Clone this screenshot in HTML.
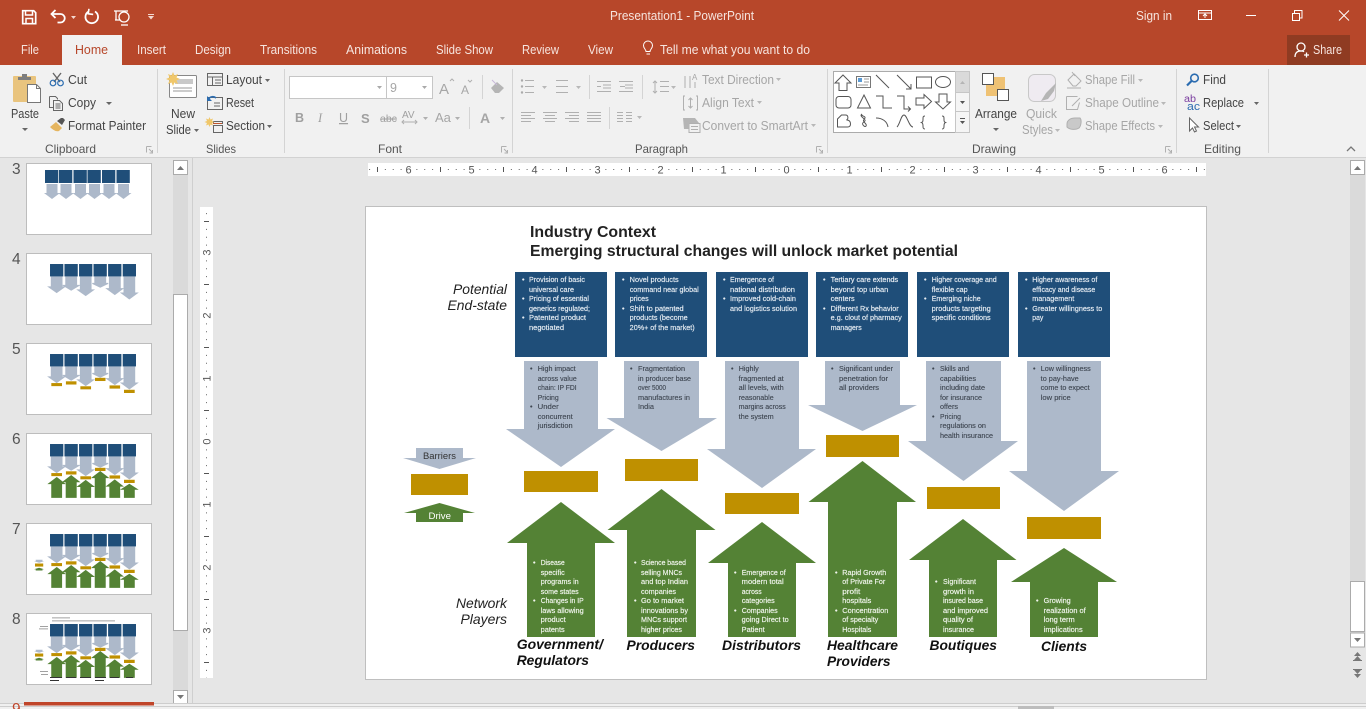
<!DOCTYPE html>
<html lang="en"><head><meta charset="utf-8"><title>Presentation1 - PowerPoint</title>
<style>
html,body{margin:0;padding:0;background:#E6E6E6;width:1366px;height:709px;overflow:hidden}
svg{display:block;position:absolute;left:0;top:0}
text{font-family:"Liberation Sans",sans-serif;white-space:pre}
.r{font-size:12.5px;fill:#444}
.g{font-size:12.5px;fill:#A6A6A6}
.gl{font-size:12px;fill:#555}
.w{font-size:12.5px;fill:#fff}
.tb{font-size:12.5px;fill:#F6E4DE}
.b{font-size:7.2px;fill:#E8EEF4;stroke:#E8EEF4;stroke-width:.15px}
.k{font-size:7.2px;fill:#3D4550;stroke:#3D4550;stroke-width:.12px}
.n{font-size:7.2px;fill:#F2F6EE;stroke:#F2F6EE;stroke-width:.15px}
.ru{font-size:11px;fill:#555;paint-order:stroke;stroke:#fff;stroke-width:3px}
.th{font-size:15.5px;fill:#555}
.i{font-size:14px;font-style:italic;fill:#222}
.bi{font-size:14px;font-style:italic;font-weight:bold;fill:#111}
.t{font-size:16px;font-weight:bold;fill:#222}
.ic{fill:none;stroke:#666;stroke-width:1}
.icg{fill:none;stroke:#B0B0B0;stroke-width:1}
.sh{fill:none;stroke:#555;stroke-width:1}
.wi{fill:none;stroke:#fff;stroke-width:1.3}
</style></head><body>
<svg width="1366" height="709" viewBox="0 0 1366 709" xmlns="http://www.w3.org/2000/svg">
<defs>
<g id="boxes" fill="#1F4E79"><rect x="515" y="272" width="92" height="85"/><rect x="615" y="272" width="92" height="85"/><rect x="716" y="272" width="92" height="85"/><rect x="816" y="272" width="92" height="85"/><rect x="917" y="272" width="92" height="85"/><rect x="1018" y="272" width="92" height="85"/></g>
<g id="grays" fill="#ADB9CA" stroke="#ADB9CA">
<polygon points="524,361 598,361 598,429 615,429 561,467 506,429 524,429"/>
<polygon points="624,361 699,361 699,418 717,418 661.5,451 606.5,418 624,418"/>
<polygon points="725,361 799,361 799,449 816,449 762,488 707,449 725,449"/>
<polygon points="825,361 900,361 900,405 917,405 862.5,431 808,405 825,405"/>
<polygon points="926,361 1001,361 1001,441 1018,441 963.5,481 908,441 926,441"/>
<polygon points="1027,361 1101,361 1101,471 1119,471 1064,511 1009,471 1027,471"/>
</g>
<g id="golds" fill="#BF9000"><rect x="524" y="471" width="74" height="21"/><rect x="625" y="459" width="73" height="22"/><rect x="725" y="493" width="74" height="21"/><rect x="826" y="435" width="73" height="22"/><rect x="927" y="487" width="73" height="22"/><rect x="1027" y="517" width="74" height="22"/></g>
<g id="greens" fill="#548235" stroke="#548235">
<polygon points="561,502 615,543 595,543 595,637 527,637 527,543 507,543"/>
<polygon points="661.5,489 715.5,530 696,530 696,637 627,637 627,530 607.5,530"/>
<polygon points="762,522 816,563 796,563 796,637 728,637 728,563 708,563"/>
<polygon points="862.5,461 916,502 897,502 897,637 828,637 828,502 808.5,502"/>
<polygon points="963,519 1016.5,560 997,560 997,637 929,637 929,560 909,560"/>
<polygon points="1064,548 1117,582 1098,582 1098,637 1030,637 1030,582 1011,582"/>
</g>
<g id="legend">
<polygon fill="#ADB9CA" points="416,448 463,448 463,458 476,458 439.5,469 403,458 416,458"/>
<rect fill="#BF9000" x="411" y="474" width="57" height="21"/>
<polygon fill="#548235" points="439.5,503 475,513 463,513 463,522 416,522 416,513 404,513"/>
</g>
</defs>

<!-- backgrounds -->
<rect width="1366" height="709" fill="#E6E6E6"/>
<rect width="1366" height="65" fill="#B7472A"/>
<rect y="65" width="1366" height="92" fill="#F1F1F1"/>
<rect y="157" width="1366" height="1" fill="#D2D2D2"/>
<rect x="62" y="35" width="60" height="30" fill="#F1F1F1"/>
<rect x="1287" y="35" width="63" height="30" fill="#8F3B22"/>

<!-- title bar icons -->
<g class="wi">
<path d="M22.700 10.700h11l2 2v11h-13z" stroke-width="1.700"/><path d="M25.500 10.700v4.300h7v-4.300" stroke-width="1.500"/><path d="M26 23.500v-5h6.500v5" stroke-width="1.500"/>
<path d="M52 14h8.500a4 4 0 0 1 0 8.500h-3" stroke-width="1.800"/><path d="M55.500 10l-4 4 4 4" stroke-width="1.800"/>
<path d="M88.500 11.500a6.300 6.300 0 1 0 6.500 0" stroke-width="1.800"/><path d="M88.500 9v5h5" stroke-width="1.600" transform="rotate(8 90 12)"/>
<path d="M114 11h14M116 11v9M120 20h-5M124 11v1"/><circle cx="124" cy="17" r="5"/><path d="M121 25h7"/>
<path d="M1198.500 10.500h13v9h-13zM1198.500 13h13M1205 18v-4M1203 16l2-2 2 2" stroke-width="1"/>
<path d="M1246 15.500h10" stroke-width="1"/>
<path d="M1292.500 13.500h7v7h-7zM1294.500 13v-2.500h7.500v7.500h-2.500" stroke-width="1"/>
<path d="M1339 10.500l10 10M1349 10.500l-10 10" stroke-width="1"/>
</g>
<path d="M71 16h5l-2.500 3z" fill="#F4D9D0"/>
<path d="M148 14h6v1h-6zM148 16h6l-3 3.500z" fill="#F4D9D0"/>

<!-- title bar text -->
<text x="610" y="20" class="tb" textLength="144" lengthAdjust="spacingAndGlyphs">Presentation1 - PowerPoint</text>
<text x="1136" y="20" class="tb" textLength="36" lengthAdjust="spacingAndGlyphs">Sign in</text>
<text x="21" y="54" class="tb" textLength="18" lengthAdjust="spacingAndGlyphs">File</text>
<text x="75" y="54" style="font-size:12.5px;fill:#B7472A" textLength="33" lengthAdjust="spacingAndGlyphs">Home</text>
<text x="137" y="54" class="tb" textLength="29" lengthAdjust="spacingAndGlyphs">Insert</text>
<text x="195" y="54" class="tb" textLength="36" lengthAdjust="spacingAndGlyphs">Design</text>
<text x="260" y="54" class="tb" textLength="57" lengthAdjust="spacingAndGlyphs">Transitions</text>
<text x="346" y="54" class="tb" textLength="61" lengthAdjust="spacingAndGlyphs">Animations</text>
<text x="436" y="54" class="tb" textLength="57" lengthAdjust="spacingAndGlyphs">Slide Show</text>
<text x="522" y="54" class="tb" textLength="37" lengthAdjust="spacingAndGlyphs">Review</text>
<text x="588" y="54" class="tb" textLength="25" lengthAdjust="spacingAndGlyphs">View</text>
<text x="660" y="54" class="tb" textLength="150" lengthAdjust="spacingAndGlyphs">Tell me what you want to do</text>
<text x="1313" y="54" class="tb" textLength="29" lengthAdjust="spacingAndGlyphs">Share</text>
<g class="wi" stroke-width="1">
<path d="M646 51.500c0-2-2.500-3-2.500-6a4.500 4.500 0 0 1 9 0c0 3-2.500 4-2.500 6zM646.500 54h3.500" stroke-width="1"/>
<circle cx="1301" cy="47" r="4"/><path d="M1295 57c0-4 2-6 6-6 1.500 0 2.500.3 3 .8M1304 55h5M1306.500 52.500v5"/>
</g>

<!-- ribbon separators -->
<g fill="#D4D4D4"><rect x="157" y="69" width="1" height="84"/><rect x="284" y="69" width="1" height="84"/><rect x="512" y="69" width="1" height="84"/><rect x="827" y="69" width="1" height="84"/><rect x="1176" y="69" width="1" height="84"/><rect x="1268" y="69" width="1" height="84"/>
<rect x="482" y="75" width="1" height="24"/><rect x="469" y="107" width="1" height="22"/><rect x="589" y="75" width="1" height="24"/><rect x="642" y="75" width="1" height="24"/><rect x="609" y="107" width="1" height="22"/></g>

<!-- clipboard -->
<rect x="13" y="76" width="23" height="26" rx="1" fill="#E9C47E"/>
<path d="M18 80v-3h4v-3h5v3h4v3z" fill="#7D7D7D"/>
<path d="M27.500 84.500h9l4 4v14h-13z" fill="#fff" stroke="#777"/>
<path d="M36.500 84.500v4h4" fill="none" stroke="#777"/>
<text x="11" y="118" class="r" textLength="28" lengthAdjust="spacingAndGlyphs">Paste</text>
<path d="M22 128h6l-3 3z" fill="#666"/>
<path d="M53 73l7 9M61 73l-7 9" stroke="#666" stroke-width="1.400" fill="none"/>
<circle cx="53" cy="83" r="2.800" fill="none" stroke="#2B6CB0" stroke-width="1.200"/><circle cx="60.500" cy="83" r="2.800" fill="none" stroke="#2B6CB0" stroke-width="1.200"/>
<text x="68" y="84" class="r" textLength="19" lengthAdjust="spacingAndGlyphs">Cut</text>
<path class="ic" d="M49.500 96.500h6l2 2v1M49.500 96.500v11h4M53.500 100.500h6l3 3v7h-9zM55.500 104h5M55.500 106h5M55.500 108h5"/>
<text x="68" y="107" class="r" textLength="28" lengthAdjust="spacingAndGlyphs">Copy</text>
<path d="M106 102h6l-3 3z" fill="#666"/>
<path d="M50 127l6-5 6 6-3 3c-3 1-6-1-9-4z" fill="#E5B55F"/><path d="M57 121l4-3 2 0 2 2-3 5z" fill="#555"/>
<text x="68" y="130" class="r" textLength="78" lengthAdjust="spacingAndGlyphs">Format Painter</text>
<text x="45" y="153" class="gl" textLength="51" lengthAdjust="spacingAndGlyphs">Clipboard</text>
<path class="icg" d="M146.500 146.500h5M146.500 146.500v6M149 149l3.500 3.500M152.500 150v3h-3" stroke="#888"/>

<!-- slides -->
<rect x="169.500" y="75.500" width="27" height="22" rx="1" fill="#fff" stroke="#888"/>
<rect x="175" y="79" width="18" height="5" fill="#C9C9C9"/>
<path d="M173 88h19M173 91h19" stroke="#999" fill="none"/>
<path d="M173 72l1.500 3.500 3.500-1.500-1.500 3.500 3.500 1.500-3.500 1.500 1.500 3.500-3.500-1.500-1.500 3.500-1.500-3.500-3.500 1.500 1.500-3.500-3.500-1.500 3.500-1.500-1.500-3.500 3.500 1.500z" fill="#F0C76A"/>
<text x="171" y="118" class="r" textLength="24" lengthAdjust="spacingAndGlyphs">New</text>
<text x="166" y="134" class="r" textLength="25" lengthAdjust="spacingAndGlyphs">Slide</text>
<path d="M194 129h5l-2.500 3z" fill="#666"/>
<path class="ic" d="M207.500 73.500h15v12h-15zM207.500 77h15M212.500 77v8.500M215 80h6M215 83h6"/>
<text x="226" y="84" class="r" textLength="36" lengthAdjust="spacingAndGlyphs">Layout</text>
<path d="M265 79h5l-2.500 3z" fill="#666"/>
<path class="ic" d="M207.500 97.500h15v12h-15zM214 103h6M214 106h6"/>
<path d="M208 100c2-4 6-4 8-2" stroke="#2B6CB0" stroke-width="1.600" fill="none"/><path d="M207 96v5h5z" fill="#2B6CB0"/>
<text x="226" y="107" class="r" textLength="28" lengthAdjust="spacingAndGlyphs">Reset</text>
<path class="ic" d="M213.500 121.500h9v2h-9zM213.500 125.500h9v7h-9z"/><path d="M213 123.500h9" stroke="#C0562F" fill="none"/>
<path d="M209.500 117l1 2.500 2.500-1-1 2.500 2.500 1-2.500 1 1 2.500-2.500-1-1 2.500-1-2.500-2.500 1 1-2.500-2.500-1 2.500-1-1-2.500 2.500 1z" fill="#F0C76A"/>
<text x="226" y="130" class="r" textLength="39" lengthAdjust="spacingAndGlyphs">Section</text>
<path d="M267 125h5l-2.500 3z" fill="#666"/>
<text x="206" y="153" class="gl" textLength="30" lengthAdjust="spacingAndGlyphs">Slides</text>

<!-- font -->
<rect x="289.500" y="76.500" width="97" height="22" fill="#fff" stroke="#C6C6C6"/>
<rect x="386.500" y="76.500" width="46" height="22" fill="#fff" stroke="#C6C6C6"/>
<text x="390" y="92" class="g">9</text>
<path d="M377 86h5l-2.500 3zM422 86h5l-2.500 3z" fill="#AAA"/>
<text x="439" y="94" style="font-size:15px;fill:#A6A6A6">A</text><text x="461" y="94" style="font-size:12px;fill:#A6A6A6">A</text>
<path d="M450 81l2-2 2 2M468 80l2 2 2-2" class="icg"/>
<path d="M491 88l6-6 7 6-5 5-4 0z" fill="#B5B5B5"/><path d="M492 80l5 5" stroke="#C8B8D8" fill="none"/>
<text x="295" y="122" style="font-size:12.500px;font-weight:bold;fill:#A0A0A0">B</text>
<text x="318" y="122" style="font-size:12.500px;font-style:italic;fill:#A0A0A0;font-family:'Liberation Serif',serif">I</text>
<text x="339" y="122" style="font-size:12.500px;fill:#A0A0A0;text-decoration:underline">U</text>
<text x="361" y="123" style="font-size:13px;font-weight:bold;fill:#A0A0A0">S</text>
<text x="380" y="122" style="font-size:10.500px;fill:#A0A0A0;text-decoration:line-through">abc</text>
<text x="402" y="118" style="font-size:10px;fill:#A0A0A0">AV</text>
<path d="M402 122h15M404 120l-2 2 2 2M415 120l2 2-2 2" class="icg"/>
<path d="M423 117h5l-2.500 3zM455 117h5l-2.500 3zM500 117h5l-2.500 3z" fill="#B0B0B0"/>
<text x="435" y="122" style="font-size:13px;fill:#A6A6A6">Aa</text>
<text x="480" y="123" style="font-size:14px;font-weight:bold;fill:#A6A6A6">A</text>
<text x="378" y="153" class="gl" textLength="24" lengthAdjust="spacingAndGlyphs">Font</text>
<path class="icg" d="M501.500 146.500h5M501.500 146.500v6M504 149l3.500 3.500M507.500 150v3h-3"/>

<!-- paragraph -->
<g class="icg">
<path d="M525 80.500h9M525 86.500h9M525 92.500h9M556 80.500h12M556 86.500h12M556 92.500h12"/>
<path d="M597 81.500h14M603 85h8M603 88h8M597 91.500h14M597 86.500h4M619 81.500h14M625 85h8M625 88h8M619 91.500h14M625 86.500h-5"/>
<path d="M655 81v12M653 83l2-2 2 2M653 91l2 2 2-2M660 81.500h9M660 86.500h9M660 91.500h9"/>
<path d="M521 112.500h14M521 115.500h10M521 118.500h14M521 121.500h10M543 112.500h14M545 115.500h10M543 118.500h14M545 121.500h10M565 112.500h14M569 115.500h10M565 118.500h14M569 121.500h10M587 112.500h14M587 115.500h14M587 118.500h14M587 121.500h14M617 112.500h6M617 115.500h6M617 118.500h6M617 121.500h6M626 112.500h6M626 115.500h6M626 118.500h6M626 121.500h6"/>
<path d="M685 76v12M690 76v12M695 82v6"/>
<path d="M685 96h-1.500v14h1.500M696 96h1.500v14H696M690.500 98v10M688.500 100l2-2 2 2M688.500 106l2 2 2-2"/>
<path d="M689 123.500h11v9h-11zM691 126.500h7M691 129.500h7"/>
</g>
<circle cx="522" cy="80.500" r="1.200" fill="#AAA"/><circle cx="522" cy="86.500" r="1.200" fill="#AAA"/><circle cx="522" cy="92.500" r="1.200" fill="#AAA"/>
<path d="M542 86h5l-2.500 3zM576 86h5l-2.500 3zM671 86h5l-2.500 3zM637 116h5l-2.500 3zM776 78h5l-2.500 3zM757 101h5l-2.500 3zM811 124h5l-2.500 3z" fill="#B8B8B8"/>
<text x="692" y="80" style="font-size:8px;fill:#A6A6A6">A</text>
<path d="M683 118h12l4 5h-10v6h-5z" fill="#B5B5B5"/>
<text x="702" y="84" class="g" textLength="72" lengthAdjust="spacingAndGlyphs">Text Direction</text>
<text x="702" y="107" class="g" textLength="52" lengthAdjust="spacingAndGlyphs">Align Text</text>
<text x="702" y="130" class="g" textLength="106" lengthAdjust="spacingAndGlyphs">Convert to SmartArt</text>
<text x="635" y="153" class="gl" textLength="53" lengthAdjust="spacingAndGlyphs">Paragraph</text>
<path class="icg" d="M816.500 146.500h5M816.500 146.500v6M819 149l3.500 3.500M822.500 150v3h-3"/>

<!-- shape gallery -->
<rect x="833.500" y="71.500" width="122" height="61" fill="#fff" stroke="#ABABAB"/>
<rect x="955.500" y="71.500" width="14" height="21" fill="#DADADA" stroke="#C6C6C6"/>
<rect x="955.500" y="92.500" width="14" height="19" fill="#F5F5F5" stroke="#C6C6C6"/>
<rect x="955.500" y="111.500" width="14" height="21" fill="#F5F5F5" stroke="#C6C6C6"/>
<path d="M960 84h5l-2.500-3z" fill="#B5B5B5"/><path d="M960 101h5l-2.500 3z" fill="#555"/><path d="M960 118h5v1h-5zM960 121h5l-2.500 3z" fill="#555"/>
<g class="sh">
<path d="M843 75l8 8h-4v7.500h-8V83h-4z"/>
<rect x="856.500" y="76.500" width="14" height="11" fill="#fff" stroke="#777"/>
<path d="M876 75l13 13M897 75l14 14M911 84v5h-5"/>
<rect x="916.500" y="77" width="15" height="11"/><ellipse cx="943" cy="82" rx="7.500" ry="5.500"/>
<rect x="836" y="96.500" width="15" height="11.500" rx="3"/><path d="M864 95l6.500 13h-13zM876 96h7v12h9M897 96h7v13h6M908 106.500l2.500 2.500-2.500 2.500"/>
<path d="M916 98h8v-3.500l7.500 7-7.500 7V105h-8zM939 94h8v8h3.500l-7.500 7-7.500-7h3.500z"/>
<path d="M837.500 127v-8l4-4h4c3 0 3 4 1 5 3 0 4 2 4 4 0 2-1 3-3 3z"/><path d="M862 114c-3 2 2 4 3 6s-4 2-2 5 5 1 2-2-1-3 0-5-5-2-3-4z"/>
<path d="M876 118c6 0 11 3 12 9M897 127c3-3 4-12 7-12s5 12 9 12"/>
<path d="M925 116c-2 0-2 1-2 3s0 3-1.500 3.500c1.500.5 1.500 2 1.500 3.500s0 3 2 3M942 116c2 0 2 1 2 3s0 3 1.500 3.500c-1.500.5-1.500 2-1.500 3.500s0 3-2 3"/>
</g>
<path d="M858 78h4v4h-4z" fill="#5B9BD5"/><path d="M864 79h5M864 82h5M858 85h10" stroke="#999" fill="none"/>

<!-- drawing -->
<rect x="986" y="77" width="19" height="19" fill="#EFC274"/>
<rect x="982.500" y="73.500" width="11" height="11" fill="#fff" stroke="#555"/>
<rect x="997.500" y="89.500" width="11" height="11" fill="#fff" stroke="#555"/>
<text x="975" y="118" class="r" textLength="42" lengthAdjust="spacingAndGlyphs">Arrange</text>
<path d="M993 128h6l-3 3z" fill="#666"/>
<rect x="1028.500" y="74.500" width="27" height="27" rx="6" fill="#EFEBF1" stroke="#C8C8C8"/>
<path d="M1041 101l5-8 6-6 4-4-2 8-6 8z" fill="#B5B5B5"/>
<text x="1026" y="118" class="g" textLength="31" lengthAdjust="spacingAndGlyphs">Quick</text>
<text x="1022" y="134" class="g" textLength="31" lengthAdjust="spacingAndGlyphs">Styles</text>
<path d="M1055 129h5l-2.500 3z" fill="#B8B8B8"/>
<path class="icg" d="M1068 80l6-6 7 7-5 5h-3zM1072 72l3 4M1067 88h14"/>
<path class="icg" d="M1066.500 96.500h11M1066.500 96.500v13h11l2-7M1072 106l8-8"/>
<path d="M1067 124c0-4 4-6 8-6h5c2 2 1 8-1 10-3 2-9 2-12-1z" fill="#C9C9C9" stroke="#AFAFAF"/>
<text x="1085" y="84" class="g" textLength="50" lengthAdjust="spacingAndGlyphs">Shape Fill</text>
<text x="1085" y="107" class="g" textLength="74" lengthAdjust="spacingAndGlyphs">Shape Outline</text>
<text x="1085" y="130" class="g" textLength="70" lengthAdjust="spacingAndGlyphs">Shape Effects</text>
<path d="M1138 79h5l-2.500 3zM1161 102h5l-2.500 3zM1158 125h5l-2.500 3z" fill="#B8B8B8"/>
<text x="972" y="153" class="gl" textLength="44" lengthAdjust="spacingAndGlyphs">Drawing</text>
<path class="icg" d="M1165.500 146.500h5M1165.500 146.500v6M1168 149l3.500 3.500M1171.500 150v3h-3"/>

<!-- editing -->
<circle cx="1194.500" cy="78" r="3.800" fill="none" stroke="#2B6CB0" stroke-width="1.600"/><path d="M1191.500 81l-4.500 4.500" stroke="#2B6CB0" stroke-width="2.200" fill="none"/>
<text x="1203" y="84" class="r" textLength="23" lengthAdjust="spacingAndGlyphs">Find</text>
<text x="1184" y="102" style="font-size:10px;fill:#7B3FA0" textLength="12" lengthAdjust="spacingAndGlyphs">ab</text>
<text x="1187" y="110" style="font-size:11px;fill:#2B6CB0" textLength="13" lengthAdjust="spacingAndGlyphs">ac</text>
<text x="1203" y="107" class="r" textLength="41" lengthAdjust="spacingAndGlyphs">Replace</text>
<path d="M1254 102h5l-2.500 3z" fill="#666"/>
<path d="M1189.500 118v13l3-3 2 4 2-1-2-4h4z" fill="#fff" stroke="#666"/>
<text x="1203" y="130" class="r" textLength="31" lengthAdjust="spacingAndGlyphs">Select</text>
<path d="M1236 125h5l-2.500 3z" fill="#666"/>
<text x="1204" y="153" class="gl" textLength="37" lengthAdjust="spacingAndGlyphs">Editing</text>
<path d="M1347 151l4-4 4 4" fill="none" stroke="#777" stroke-width="1.300"/>

<!-- left pane -->
<rect x="192" y="158" width="1" height="545" fill="#CFCFCF"/>
<rect x="173" y="160" width="15" height="543" fill="#DADADA"/>
<rect x="173.500" y="160.500" width="14" height="14" fill="#fff" stroke="#ABABAB"/>
<path d="M177 170h7l-3.500-4z" fill="#777"/>
<rect x="173.500" y="294.500" width="14" height="336" fill="#fff" stroke="#ABABAB"/>
<rect x="173.500" y="690.500" width="14" height="14" fill="#fff" stroke="#ABABAB"/>
<path d="M177 695h7l-3.500 4z" fill="#777"/>

<!-- thumbnails -->
<g fill="#fff" stroke="#BDBDBD">
<rect x="26.500" y="163.500" width="125" height="71"/><rect x="26.500" y="253.500" width="125" height="71"/><rect x="26.500" y="343.500" width="125" height="71"/><rect x="26.500" y="433.500" width="125" height="71"/><rect x="26.500" y="523.500" width="125" height="71"/><rect x="26.500" y="613.500" width="125" height="71"/>
</g>
<text x="12" y="174" class="th">3</text><text x="12" y="264" class="th">4</text><text x="12" y="354" class="th">5</text><text x="12" y="444" class="th">6</text><text x="12" y="534" class="th">7</text><text x="12" y="624" class="th">8</text>
<g fill="#1F4E79"><rect x="45" y="170" width="13.300" height="13"/><rect x="59" y="170" width="13.300" height="13"/><rect x="73.500" y="170" width="13.300" height="13"/><rect x="87.500" y="170" width="13.300" height="13"/><rect x="102" y="170" width="13.300" height="13"/><rect x="116.500" y="170" width="13.300" height="13"/></g>
<g fill="#ADB9CA">
<polygon points="46.500,184 57.500,184 57.500,193 60,193 52,199 44,193 46.500,193"/><polygon points="60.500,184 71.500,184 71.500,193 74,193 66,199 58,193 60.500,193"/><polygon points="75,184 86,184 86,193 88.500,193 80.500,199 72.500,193 75,193"/><polygon points="89,184 100,184 100,193 102.500,193 94.500,199 86.500,193 89,193"/><polygon points="103.500,184 114.500,184 114.500,193 117,193 109,199 101,193 103.500,193"/><polygon points="118,184 129,184 129,193 131.500,193 123.500,199 115.500,193 118,193"/>
</g>
<g stroke-width="7">
<g transform="translate(-24.400 224.300) scale(.1445 .146)"><use href="#boxes"/><use href="#grays"/></g>
<g transform="translate(-24.400 314.300) scale(.1445 .146)"><use href="#boxes"/><use href="#grays"/><use href="#golds"/></g>
<g transform="translate(-24.400 404.300) scale(.1445 .146)"><use href="#boxes"/><use href="#grays"/><use href="#golds"/><use href="#greens"/></g>
<g transform="translate(-24.400 494.300) scale(.1445 .146)"><use href="#boxes"/><use href="#grays"/><use href="#golds"/><use href="#greens"/><use href="#legend"/></g>
<g transform="translate(-24.400 584.300) scale(.1445 .146)"><use href="#boxes"/><use href="#grays"/><use href="#golds"/><use href="#greens"/><use href="#legend"/></g>
</g>
<g fill="#8A8A8A"><rect x="52" y="617.500" width="18" height=".8"/><rect x="52" y="620.500" width="63" height=".8"/><rect x="40" y="626" width="8" height=".8"/><rect x="39" y="628.500" width="9" height=".8"/><rect x="40" y="671" width="8" height=".8"/><rect x="41" y="674" width="7" height=".8"/></g>
<g fill="#333"><rect x="50" y="677" width="12" height="1"/><rect x="50" y="680" width="9" height="1"/><rect x="66" y="677" width="10" height="1"/><rect x="80" y="677" width="11" height="1"/><rect x="95" y="677" width="11" height="1"/><rect x="95" y="680" width="9" height="1"/><rect x="110" y="677" width="9" height="1"/><rect x="126" y="677" width="7" height="1"/></g>

<!-- horizontal ruler -->
<rect x="368" y="163" width="838" height="13" fill="#fff"/>
<line x1="369.100" y1="169.500" x2="1206" y2="169.500" stroke="#666" stroke-dasharray="1 6.875"/>
<line x1="377" y1="169.500" x2="1206" y2="169.500" stroke="#555" stroke-width="5" stroke-dasharray="1 62"/>
<g class="ru" text-anchor="middle">
<text x="408.500" y="173.500">6</text><text x="471.500" y="173.500">5</text><text x="534.500" y="173.500">4</text><text x="597.500" y="173.500">3</text><text x="660.500" y="173.500">2</text><text x="723.500" y="173.500">1</text><text x="786.500" y="173.500">0</text><text x="849.500" y="173.500">1</text><text x="912.500" y="173.500">2</text><text x="975.500" y="173.500">3</text><text x="1038.500" y="173.500">4</text><text x="1101.500" y="173.500">5</text><text x="1164.500" y="173.500">6</text>
</g>
<!-- vertical ruler -->
<rect x="200" y="207" width="13" height="471" fill="#fff"/>
<line x1="206.500" y1="213.100" x2="206.500" y2="678" stroke="#666" stroke-dasharray="1 6.875"/>
<line x1="206.500" y1="221" x2="206.500" y2="678" stroke="#555" stroke-width="5" stroke-dasharray="1 62"/>
<g class="ru" text-anchor="middle">
<text transform="translate(210.500 252.500) rotate(-90)">3</text><text transform="translate(210.500 315.500) rotate(-90)">2</text><text transform="translate(210.500 378.500) rotate(-90)">1</text><text transform="translate(210.500 441.500) rotate(-90)">0</text><text transform="translate(210.500 504.500) rotate(-90)">1</text><text transform="translate(210.500 567.500) rotate(-90)">2</text><text transform="translate(210.500 630.500) rotate(-90)">3</text>
</g>

<!-- right scrollbar -->
<rect x="1350" y="160" width="15" height="487" fill="#DADADA"/>
<rect x="1350.500" y="160.500" width="14" height="14" fill="#fff" stroke="#ABABAB"/>
<path d="M1354 170h7l-3.500-4z" fill="#777"/>
<rect x="1350.500" y="581.500" width="14" height="50" fill="#fff" stroke="#ABABAB"/>
<rect x="1350.500" y="633" width="14" height="14" fill="#fff" stroke="#ABABAB"/>
<path d="M1354 638h7l-3.500 4z" fill="#777"/>
<path d="M1354 656l3.500-4 3.500 4zM1354 660l3.500-4 3.500 4zM1354 670h7l-3.500 4zM1354 674h7l-3.500 4z" fill="#777"/><rect x="1353" y="660" width="9" height="1" fill="#777"/><rect x="1353" y="669" width="9" height="1" fill="#777"/>

<!-- slide -->
<rect x="365.500" y="206.500" width="841" height="473" fill="#fff" stroke="#BFBFBF"/>
<text x="530" y="237" class="t" textLength="126" lengthAdjust="spacingAndGlyphs">Industry Context</text>
<text x="530" y="256" class="t" textLength="428" lengthAdjust="spacingAndGlyphs">Emerging structural changes will unlock market potential</text>
<g stroke-width="0"><use href="#boxes"/><use href="#grays"/><use href="#golds"/><use href="#greens"/><use href="#legend"/></g>
<text x="453" y="294" class="i" textLength="54" lengthAdjust="spacingAndGlyphs">Potential</text>
<text x="447.500" y="310" class="i" textLength="59.500" lengthAdjust="spacingAndGlyphs">End-state</text>
<text x="456" y="608" class="i" textLength="51" lengthAdjust="spacingAndGlyphs">Network</text>
<text x="460.500" y="624" class="i" textLength="46.500" lengthAdjust="spacingAndGlyphs">Players</text>
<text x="423" y="459" style="font-size:9px;fill:#333" textLength="33" lengthAdjust="spacingAndGlyphs">Barriers</text>
<text x="428.500" y="519" style="font-size:9px;fill:#fff" textLength="22.500" lengthAdjust="spacingAndGlyphs">Drive</text>
<text x="516.700" y="649" class="bi" textLength="86.300" lengthAdjust="spacingAndGlyphs">Government/</text>
<text x="516.700" y="665" class="bi" textLength="72.300" lengthAdjust="spacingAndGlyphs">Regulators</text>
<text x="626.500" y="650" class="bi" textLength="68.500" lengthAdjust="spacingAndGlyphs">Producers</text>
<text x="722" y="650" class="bi" textLength="79" lengthAdjust="spacingAndGlyphs">Distributors</text>
<text x="827" y="650" class="bi" textLength="71" lengthAdjust="spacingAndGlyphs">Healthcare</text>
<text x="827" y="666" class="bi" textLength="63.500" lengthAdjust="spacingAndGlyphs">Providers</text>
<text x="929.500" y="650" class="bi" textLength="67.500" lengthAdjust="spacingAndGlyphs">Boutiques</text>
<text x="1041" y="651" class="bi" textLength="46" lengthAdjust="spacingAndGlyphs">Clients</text>

<!-- blue box text -->
<g class="b">
<text x="522" y="282">•</text><text x="529" y="282" textLength="56" lengthAdjust="spacingAndGlyphs">Provision of basic</text>
<text x="529" y="292" textLength="45" lengthAdjust="spacingAndGlyphs">universal care</text>
<text x="522" y="301">•</text><text x="529" y="301" textLength="60" lengthAdjust="spacingAndGlyphs">Pricing of essential</text>
<text x="529" y="311" textLength="61" lengthAdjust="spacingAndGlyphs">generics regulated;</text>
<text x="522" y="320">•</text><text x="529" y="320" textLength="57" lengthAdjust="spacingAndGlyphs">Patented product</text>
<text x="529" y="330" textLength="35" lengthAdjust="spacingAndGlyphs">negotiated</text>

<text x="622" y="282">•</text><text x="629.700" y="282" textLength="49" lengthAdjust="spacingAndGlyphs">Novel products</text>
<text x="629.700" y="292" textLength="69" lengthAdjust="spacingAndGlyphs">command near global</text>
<text x="629.700" y="301" textLength="19" lengthAdjust="spacingAndGlyphs">prices</text>
<text x="622" y="311">•</text><text x="629.700" y="311" textLength="54" lengthAdjust="spacingAndGlyphs">Shift to patented</text>
<text x="629.700" y="320" textLength="58" lengthAdjust="spacingAndGlyphs">products (become</text>
<text x="629.700" y="330" textLength="65" lengthAdjust="spacingAndGlyphs">20%+ of the market)</text>

<text x="723" y="282">•</text><text x="730" y="282" textLength="44" lengthAdjust="spacingAndGlyphs">Emergence of</text>
<text x="730" y="292" textLength="65" lengthAdjust="spacingAndGlyphs">national distribution</text>
<text x="723" y="301">•</text><text x="730" y="301" textLength="66" lengthAdjust="spacingAndGlyphs">Improved cold-chain</text>
<text x="730" y="311" textLength="67" lengthAdjust="spacingAndGlyphs">and logistics solution</text>

<text x="823" y="282">•</text><text x="830.700" y="282" textLength="67.500" lengthAdjust="spacingAndGlyphs">Tertiary care extends</text>
<text x="830.700" y="292" textLength="57.500" lengthAdjust="spacingAndGlyphs">beyond top urban</text>
<text x="830.700" y="301" textLength="24" lengthAdjust="spacingAndGlyphs">centers</text>
<text x="823" y="311">•</text><text x="830.700" y="311" textLength="68" lengthAdjust="spacingAndGlyphs">Different Rx behavior</text>
<text x="830.700" y="320" textLength="71" lengthAdjust="spacingAndGlyphs">e.g. clout of pharmacy</text>
<text x="830.700" y="330" textLength="31" lengthAdjust="spacingAndGlyphs">managers</text>

<text x="924" y="282">•</text><text x="931.700" y="282" textLength="65" lengthAdjust="spacingAndGlyphs">Higher coverage and</text>
<text x="931.700" y="292" textLength="36" lengthAdjust="spacingAndGlyphs">flexible cap</text>
<text x="924" y="301">•</text><text x="931.700" y="301" textLength="49" lengthAdjust="spacingAndGlyphs">Emerging niche</text>
<text x="931.700" y="311" textLength="59" lengthAdjust="spacingAndGlyphs">products targeting</text>
<text x="931.700" y="320" textLength="59" lengthAdjust="spacingAndGlyphs">specific conditions</text>

<text x="1025" y="282">•</text><text x="1032.300" y="282" textLength="65" lengthAdjust="spacingAndGlyphs">Higher awareness of</text>
<text x="1032.300" y="292" textLength="63" lengthAdjust="spacingAndGlyphs">efficacy and disease</text>
<text x="1032.300" y="301" textLength="42" lengthAdjust="spacingAndGlyphs">management</text>
<text x="1025" y="311">•</text><text x="1032.300" y="311" textLength="70" lengthAdjust="spacingAndGlyphs">Greater willingness to</text>
<text x="1032.300" y="320" textLength="11" lengthAdjust="spacingAndGlyphs">pay</text>
</g>

<!-- gray arrow text -->
<g class="k">
<text x="530" y="371">•</text><text x="537.700" y="371" textLength="38" lengthAdjust="spacingAndGlyphs">High impact</text>
<text x="537.700" y="381" textLength="39" lengthAdjust="spacingAndGlyphs">across value</text>
<text x="537.700" y="390" textLength="39" lengthAdjust="spacingAndGlyphs">chain: IP FDI</text>
<text x="537.700" y="400" textLength="21" lengthAdjust="spacingAndGlyphs">Pricing</text>
<text x="530" y="409">•</text><text x="537.700" y="409" textLength="21" lengthAdjust="spacingAndGlyphs">Under</text>
<text x="537.700" y="419" textLength="35" lengthAdjust="spacingAndGlyphs">concurrent</text>
<text x="537.700" y="428" textLength="35" lengthAdjust="spacingAndGlyphs">jurisdiction</text>

<text x="630" y="371">•</text><text x="638" y="371" textLength="47" lengthAdjust="spacingAndGlyphs">Fragmentation</text>
<text x="638" y="381" textLength="53" lengthAdjust="spacingAndGlyphs">in producer base</text>
<text x="638" y="390" textLength="28" lengthAdjust="spacingAndGlyphs">over 5000</text>
<text x="638" y="400" textLength="52" lengthAdjust="spacingAndGlyphs">manufactures in</text>
<text x="638" y="409" textLength="16" lengthAdjust="spacingAndGlyphs">India</text>

<text x="731" y="371">•</text><text x="738.700" y="371" textLength="20" lengthAdjust="spacingAndGlyphs">Highly</text>
<text x="738.700" y="381" textLength="45" lengthAdjust="spacingAndGlyphs">fragmented at</text>
<text x="738.700" y="390" textLength="45" lengthAdjust="spacingAndGlyphs">all levels, with</text>
<text x="738.700" y="400" textLength="35" lengthAdjust="spacingAndGlyphs">reasonable</text>
<text x="738.700" y="409" textLength="47" lengthAdjust="spacingAndGlyphs">margins across</text>
<text x="738.700" y="419" textLength="35" lengthAdjust="spacingAndGlyphs">the system</text>

<text x="831" y="371">•</text><text x="839" y="371" textLength="54" lengthAdjust="spacingAndGlyphs">Significant under</text>
<text x="839" y="381" textLength="49" lengthAdjust="spacingAndGlyphs">penetration for</text>
<text x="839" y="390" textLength="40" lengthAdjust="spacingAndGlyphs">all providers</text>

<text x="932" y="371">•</text><text x="940" y="371" textLength="29" lengthAdjust="spacingAndGlyphs">Skills and</text>
<text x="940" y="381" textLength="36" lengthAdjust="spacingAndGlyphs">capabilities</text>
<text x="940" y="390" textLength="45" lengthAdjust="spacingAndGlyphs">including date</text>
<text x="940" y="400" textLength="42" lengthAdjust="spacingAndGlyphs">for insurance</text>
<text x="940" y="409" textLength="18" lengthAdjust="spacingAndGlyphs">offers</text>
<text x="932" y="419">•</text><text x="940" y="419" textLength="21" lengthAdjust="spacingAndGlyphs">Pricing</text>
<text x="940" y="428" textLength="46" lengthAdjust="spacingAndGlyphs">regulations on</text>
<text x="940" y="438" textLength="53" lengthAdjust="spacingAndGlyphs">health insurance</text>

<text x="1033" y="371">•</text><text x="1040.700" y="371" textLength="50" lengthAdjust="spacingAndGlyphs">Low willingness</text>
<text x="1040.700" y="381" textLength="38" lengthAdjust="spacingAndGlyphs">to pay-have</text>
<text x="1040.700" y="390" textLength="49" lengthAdjust="spacingAndGlyphs">come to expect</text>
<text x="1040.700" y="400" textLength="30" lengthAdjust="spacingAndGlyphs">low price</text>
</g>

<!-- green arrow text -->
<g class="n">
<text x="533" y="565">•</text><text x="540.700" y="565" textLength="24" lengthAdjust="spacingAndGlyphs">Disease</text>
<text x="540.700" y="575" textLength="24" lengthAdjust="spacingAndGlyphs">specific</text>
<text x="540.700" y="584" textLength="38" lengthAdjust="spacingAndGlyphs">programs in</text>
<text x="540.700" y="594" textLength="38" lengthAdjust="spacingAndGlyphs">some states</text>
<text x="533" y="603">•</text><text x="540.700" y="603" textLength="43" lengthAdjust="spacingAndGlyphs">Changes in IP</text>
<text x="540.700" y="613" textLength="43" lengthAdjust="spacingAndGlyphs">laws allowing</text>
<text x="540.700" y="622" textLength="25" lengthAdjust="spacingAndGlyphs">product</text>
<text x="540.700" y="632" textLength="24" lengthAdjust="spacingAndGlyphs">patents</text>

<text x="634" y="565">•</text><text x="641" y="565" textLength="45" lengthAdjust="spacingAndGlyphs">Science based</text>
<text x="641" y="575" textLength="41" lengthAdjust="spacingAndGlyphs">selling MNCs</text>
<text x="641" y="584" textLength="47" lengthAdjust="spacingAndGlyphs">and top Indian</text>
<text x="641" y="594" textLength="35" lengthAdjust="spacingAndGlyphs">companies</text>
<text x="634" y="603">•</text><text x="641" y="603" textLength="43" lengthAdjust="spacingAndGlyphs">Go to market</text>
<text x="641" y="613" textLength="47" lengthAdjust="spacingAndGlyphs">innovations by</text>
<text x="641" y="622" textLength="46" lengthAdjust="spacingAndGlyphs">MNCs support</text>
<text x="641" y="632" textLength="41" lengthAdjust="spacingAndGlyphs">higher prices</text>

<text x="734" y="575">•</text><text x="741.700" y="575" textLength="44" lengthAdjust="spacingAndGlyphs">Emergence of</text>
<text x="741.700" y="584" textLength="42" lengthAdjust="spacingAndGlyphs">modern total</text>
<text x="741.700" y="594" textLength="20" lengthAdjust="spacingAndGlyphs">across</text>
<text x="741.700" y="603" textLength="33" lengthAdjust="spacingAndGlyphs">categories</text>
<text x="734" y="613">•</text><text x="741.700" y="613" textLength="36" lengthAdjust="spacingAndGlyphs">Companies</text>
<text x="741.700" y="622" textLength="47" lengthAdjust="spacingAndGlyphs">going Direct to</text>
<text x="741.700" y="632" textLength="23" lengthAdjust="spacingAndGlyphs">Patient</text>

<text x="835" y="575">•</text><text x="842.300" y="575" textLength="44" lengthAdjust="spacingAndGlyphs">Rapid Growth</text>
<text x="842.300" y="584" textLength="43" lengthAdjust="spacingAndGlyphs">of Private For</text>
<text x="842.300" y="594" textLength="18" lengthAdjust="spacingAndGlyphs">profit</text>
<text x="842.300" y="603" textLength="29" lengthAdjust="spacingAndGlyphs">hospitals</text>
<text x="835" y="613">•</text><text x="842.300" y="613" textLength="46" lengthAdjust="spacingAndGlyphs">Concentration</text>
<text x="842.300" y="622" textLength="36" lengthAdjust="spacingAndGlyphs">of specialty</text>
<text x="842.300" y="632" textLength="29" lengthAdjust="spacingAndGlyphs">Hospitals</text>

<text x="935" y="584">•</text><text x="943" y="584" textLength="33" lengthAdjust="spacingAndGlyphs">Significant</text>
<text x="943" y="594" textLength="31" lengthAdjust="spacingAndGlyphs">growth in</text>
<text x="943" y="603" textLength="40" lengthAdjust="spacingAndGlyphs">insured base</text>
<text x="943" y="613" textLength="45" lengthAdjust="spacingAndGlyphs">and improved</text>
<text x="943" y="622" textLength="30" lengthAdjust="spacingAndGlyphs">quality of</text>
<text x="943" y="632" textLength="31" lengthAdjust="spacingAndGlyphs">insurance</text>

<text x="1036" y="603">•</text><text x="1043.700" y="603" textLength="27" lengthAdjust="spacingAndGlyphs">Growing</text>
<text x="1043.700" y="613" textLength="42" lengthAdjust="spacingAndGlyphs">realization of</text>
<text x="1043.700" y="622" textLength="31" lengthAdjust="spacingAndGlyphs">long term</text>
<text x="1043.700" y="632" textLength="39" lengthAdjust="spacingAndGlyphs">implications</text>
</g>

<!-- status strip -->
<rect y="703" width="1366" height="6" fill="#F0F0F0"/>
<rect y="703" width="1366" height="1" fill="#CDCDCD"/>
<rect y="706" width="1366" height="1" fill="#CDCDCD"/>
<rect x="24" y="702" width="130" height="3.500" fill="#C0452A"/>
<text x="12" y="714" class="th" style="fill:#C0452A">9</text>
<rect x="1018" y="706" width="36" height="3" fill="#BDBDBD"/>
</svg>
</body></html>
